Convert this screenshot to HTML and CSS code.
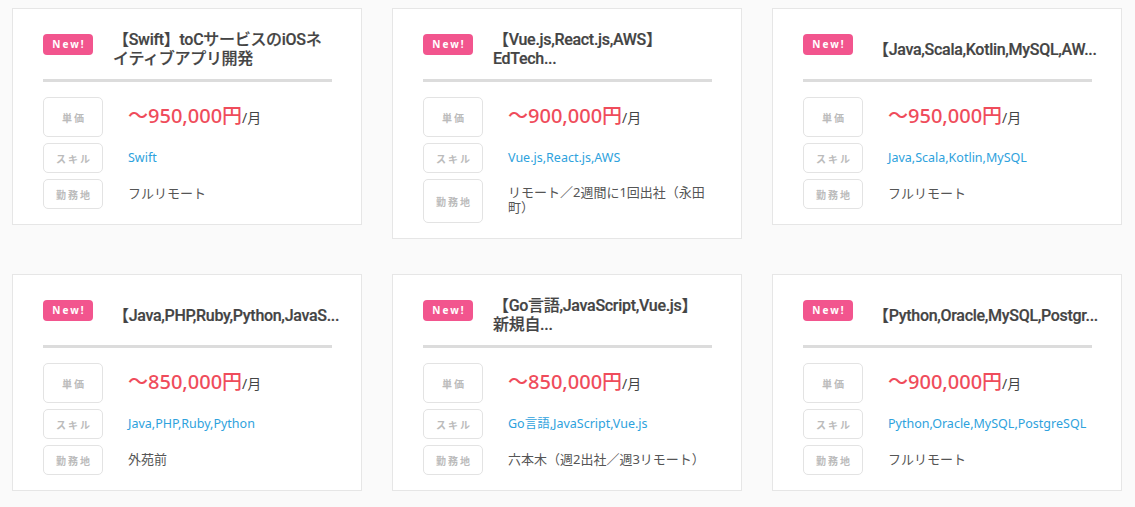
FILE: index.html
```html
<!DOCTYPE html>
<html lang="ja">
<head>
<meta charset="utf-8">
<link rel="stylesheet" href="styles.css">
</head>
<body>
<div class="grid">
  <div class="card">
    <div class="head"><span class="badge">New!</span><h3 class="title">【Swift】toCサービスのiOSネイティブアプリ開発</h3></div>
    <div class="rule"></div>
    <dl class="info">
      <div class="row row-price"><dt class="label">単価</dt><dd class="value"><span class="price">～950,000円</span><span class="unit">/月</span></dd></div>
      <div class="row"><dt class="label">スキル</dt><dd class="value skills">Swift</dd></div>
      <div class="row"><dt class="label">勤務地</dt><dd class="value">フルリモート</dd></div>
    </dl>
  </div>
  <div class="card">
    <div class="head"><span class="badge">New!</span><h3 class="title">【Vue.js,React.js,AWS】EdTech...</h3></div>
    <div class="rule"></div>
    <dl class="info">
      <div class="row row-price"><dt class="label">単価</dt><dd class="value"><span class="price">～900,000円</span><span class="unit">/月</span></dd></div>
      <div class="row"><dt class="label">スキル</dt><dd class="value skills">Vue.js,React.js,AWS</dd></div>
      <div class="row"><dt class="label">勤務地</dt><dd class="value">リモート／2週間に1回出社（永田町）</dd></div>
    </dl>
  </div>
  <div class="card">
    <div class="head"><span class="badge">New!</span><h3 class="title">【Java,Scala,Kotlin,MySQL,AW...</h3></div>
    <div class="rule"></div>
    <dl class="info">
      <div class="row row-price"><dt class="label">単価</dt><dd class="value"><span class="price">～950,000円</span><span class="unit">/月</span></dd></div>
      <div class="row"><dt class="label">スキル</dt><dd class="value skills">Java,Scala,Kotlin,MySQL</dd></div>
      <div class="row"><dt class="label">勤務地</dt><dd class="value">フルリモート</dd></div>
    </dl>
  </div>
  <div class="card">
    <div class="head"><span class="badge">New!</span><h3 class="title">【Java,PHP,Ruby,Python,JavaS...</h3></div>
    <div class="rule"></div>
    <dl class="info">
      <div class="row row-price"><dt class="label">単価</dt><dd class="value"><span class="price">～850,000円</span><span class="unit">/月</span></dd></div>
      <div class="row"><dt class="label">スキル</dt><dd class="value skills">Java,PHP,Ruby,Python</dd></div>
      <div class="row"><dt class="label">勤務地</dt><dd class="value">外苑前</dd></div>
    </dl>
  </div>
  <div class="card">
    <div class="head"><span class="badge">New!</span><h3 class="title">【Go言語,JavaScript,Vue.js】新規自...</h3></div>
    <div class="rule"></div>
    <dl class="info">
      <div class="row row-price"><dt class="label">単価</dt><dd class="value"><span class="price">～850,000円</span><span class="unit">/月</span></dd></div>
      <div class="row"><dt class="label">スキル</dt><dd class="value skills">Go言語,JavaScript,Vue.js</dd></div>
      <div class="row"><dt class="label">勤務地</dt><dd class="value">六本木（週2出社／週3リモート）</dd></div>
    </dl>
  </div>
  <div class="card">
    <div class="head"><span class="badge">New!</span><h3 class="title">【Python,Oracle,MySQL,Postgr...</h3></div>
    <div class="rule"></div>
    <dl class="info">
      <div class="row row-price"><dt class="label">単価</dt><dd class="value"><span class="price">～900,000円</span><span class="unit">/月</span></dd></div>
      <div class="row"><dt class="label">スキル</dt><dd class="value skills">Python,Oracle,MySQL,PostgreSQL</dd></div>
      <div class="row"><dt class="label">勤務地</dt><dd class="value">フルリモート</dd></div>
    </dl>
  </div>
</div>
</body>
</html>
```
FILE: styles.css
```css
* { box-sizing: border-box; }
html, body { margin: 0; padding: 0; }
body {
  background: #fafafa;
  font-family: "Noto Sans", "Noto Sans CJK JP", sans-serif;
  color: #444;
}
.grid {
  display: grid;
  grid-template-columns: repeat(3, 350px);
  column-gap: 30px;
  row-gap: 35px;
  align-items: start;
  padding: 8px 0 0 12px;
}
.card {
  background: #fff;
  border: 1px solid #e6e6e6;
  padding: 21px 29px 15px 30px;
}
.head {
  display: flex;
  align-items: center;
  gap: 20px;
  min-height: 38px;
}
.badge {
  align-self: flex-start;
  margin-top: 4px;
  flex: 0 0 50px;
  height: 21px;
  border-radius: 4px;
  background: #f2558e;
  color: #fff;
  font-family: "Noto Sans", sans-serif;
  font-weight: 700;
  font-size: 10px;
  letter-spacing: 2px;
  line-height: 21px;
  text-align: center;
  padding-left: 2px;
}
.title {
  margin: 0;
  flex: 1;
  min-width: 0;
  font-family: "Roboto", "Noto Sans CJK JP", sans-serif;
  font-size: 16px;
  font-weight: 500;
  line-height: 19px;
  letter-spacing: -0.3px;
  color: #444;
  -webkit-text-stroke: 0.2px #444;
}
.rule {
  height: 3px;
  background: #dcdcdc;
  margin-top: 11px;
}
.info {
  margin: 15px 0 0;
  display: flex;
  flex-direction: column;
  gap: 6px;
}
.row {
  display: flex;
  align-items: center;
  min-height: 30px;
}
.row-price { min-height: 40px; }
.label {
  flex: 0 0 60px;
  align-self: stretch;
  display: flex;
  align-items: center;
  justify-content: center;
  border: 1px solid #e3e3e3;
  border-radius: 5px;
  color: #bbb;
  font-family: "Noto Sans CJK JP", sans-serif;
  font-weight: 700;
  font-size: 10px;
  letter-spacing: 2px;
  padding-left: 2px;
}
.value {
  margin: 0 0 0 25px;
  flex: 1;
  font-family: "Noto Sans", "Noto Sans CJK JP", sans-serif;
  font-size: 13px;
  line-height: 15px;
  padding: 6px 0 8px;
  color: #555;
}
.skills { color: #2ea2dd; font-size: 12.5px; }
.price {
  color: #ef4c5b;
  font-size: 20px;
  font-weight: 500;
  line-height: 24px;
}
.unit {
  color: #444;
  font-size: 14px;
}
```
